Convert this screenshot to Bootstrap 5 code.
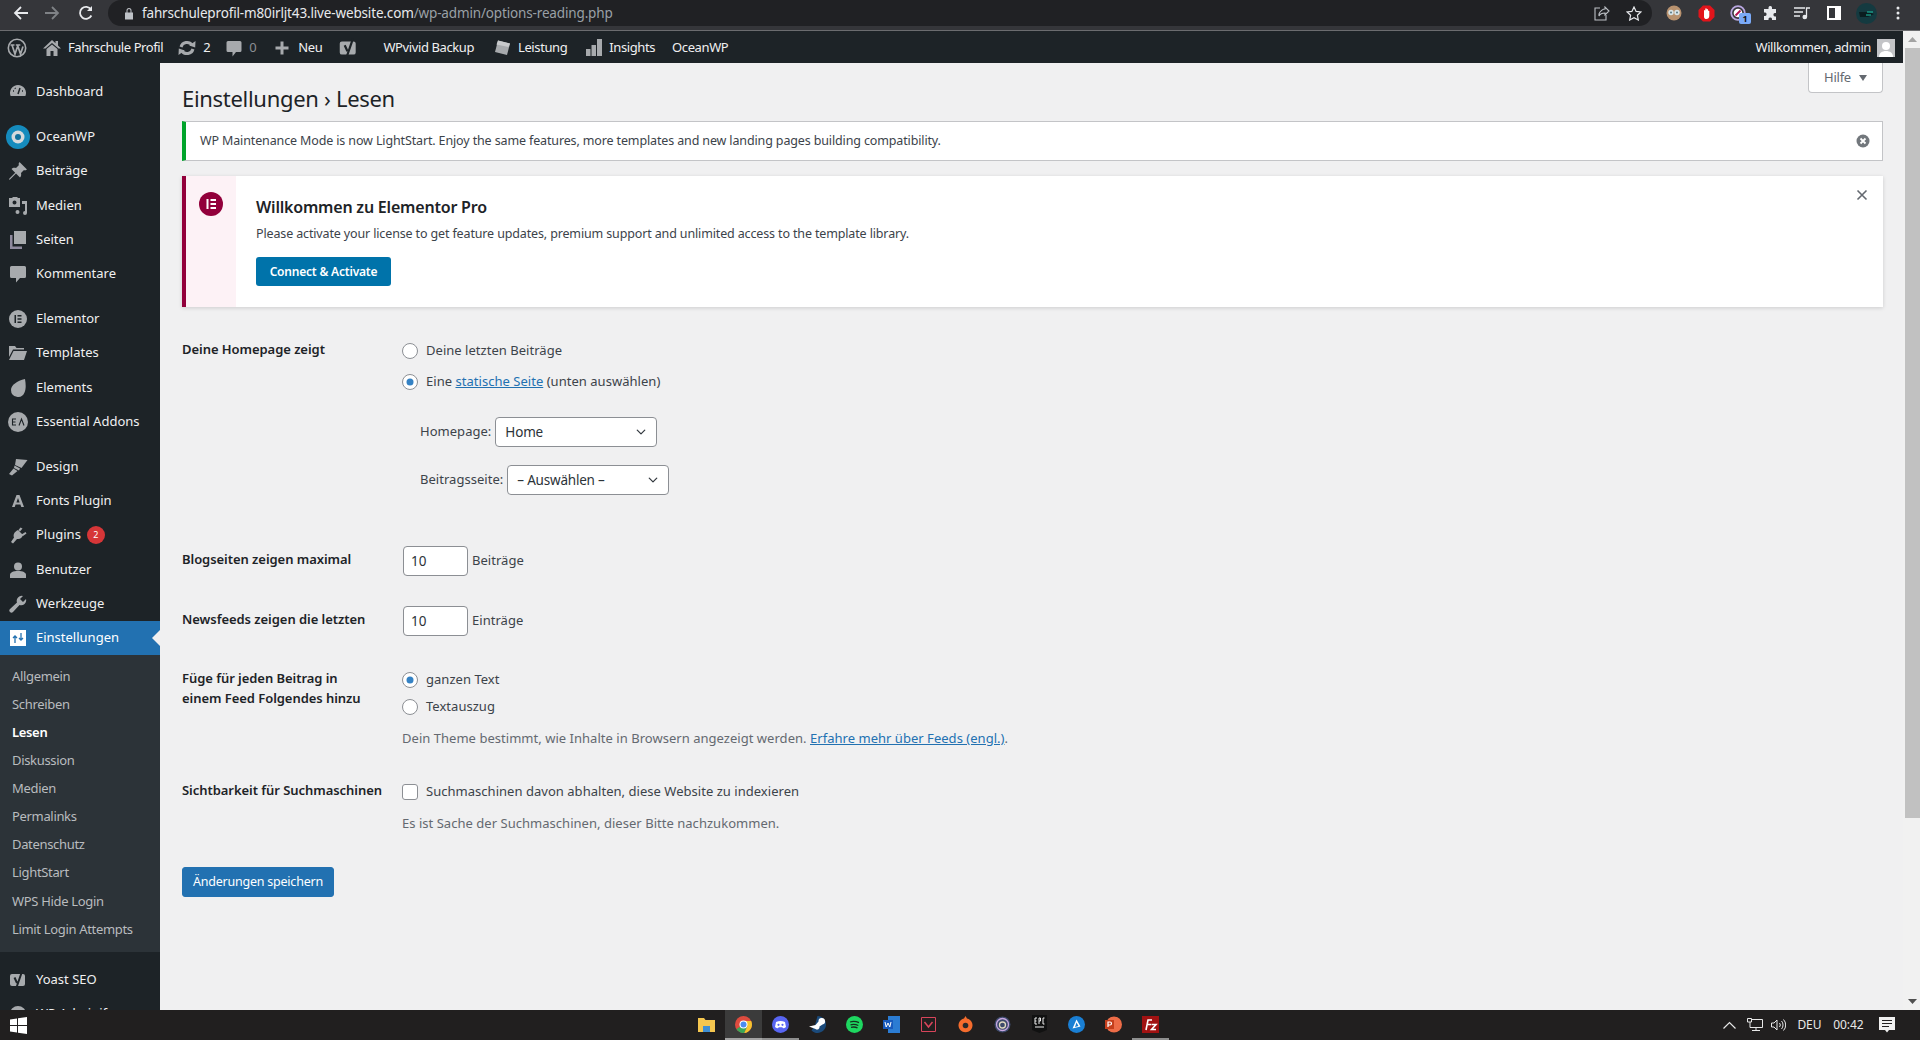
<!DOCTYPE html>
<html lang="de">
<head>
<meta charset="UTF-8">
<title>Einstellungen › Lesen</title>
<link href="https://cdn.jsdelivr.net/npm/bootstrap@5.3.0/dist/css/bootstrap.min.css" rel="stylesheet">
<style>
html, body { height: 100%; overflow: hidden; }
body { font-family: "Noto Sans", "Liberation Sans", sans-serif; font-size: 13px; letter-spacing: -.25px; color: #3c434a; background: #f0f0f1; }
.app-shell { height: 1040px; }
svg { display: block; flex: none; }

/* browser chrome */
.chrome-bar { height: 31px; background: #35363a; border-bottom: 1px solid #6b6c6f; flex: none; }
.chrome-btn { width: 32px; display: flex; justify-content: center; }
.chrome-nav { padding-left: 13px; height: 26px; width: 108px; }
.nav-gap { margin-right: 15px; }
.nav-gap-wide { margin-right: 18px; }
.url-pill { height: 26px; width: 1544px; background: #202124; border-radius: 13px; padding: 0 10px 0 16px; color: #e8eaed; font-size: 13.5px; letter-spacing: -.15px; }
.url-pill span { color: #9aa0a6; }
.chrome-ext { height: 26px; margin-left: 6px; }
.ext-badge { position: absolute; left: 17px; top: 8px; width: 12px; height: 11px; background: #7baaf7; color: #111; font-size: 9px; font-weight: 700; line-height: 11px; text-align: center; border-radius: 2px; letter-spacing: 0; }

/* admin bar */
.admin-top { height: 32px; background: #1d2327; color: #f0f0f1; flex: none; padding: 2px 8px 0 0; letter-spacing: -.4px; }
.admin-top .bar-item { display: flex; align-items: center; gap: 6px; white-space: nowrap; }
.bar-muted { color: #8c8f94; }
.bar-logo { margin-left: 7px; }
.bar-gap-14 { margin-left: 14px; }
.bar-gap-15 { margin-left: 15px; }
.bar-gap-16 { margin-left: 16px; }
.bar-gap-17 { margin-left: 17px; }
.bar-gap-18 { margin-left: 18px; }
.bar-gap-24 { margin-left: 24px; }

/* side menu */
.side-menu { width: 160px; background: #1d2327; color: #f0f0f1; padding-top: 12px; overflow: hidden; flex: none; letter-spacing: 0; }
.menu-item { height: 34.3px; display: flex; align-items: center; white-space: nowrap; position: relative; }
.menu-ico { width: 36px; display: flex; justify-content: center; flex: none; }
.menu-sep { height: 10.5px; }
.menu-item.is-current { background: #2271b1; color: #fff; }
.menu-item.is-current::after { content: ""; position: absolute; right: 0; top: 9px; border: 8px solid transparent; border-right-color: #f0f0f1; border-left-width: 0; }
.plugin-count { display: inline-block; background: #d63638; color: #fff; font-size: 9px; letter-spacing: 0; border-radius: 9px; min-width: 18px; height: 18px; line-height: 18px; text-align: center; margin-left: 6px; }
.sub-menu { background: #2c3338; padding: 6.5px 0 9.5px; margin-bottom: 10.5px; letter-spacing: -.33px; }
.sub-menu div { height: 28.1px; line-height: 28.1px; padding-left: 12px; color: #b9bcbf; white-space: nowrap; }
.sub-menu .is-on { color: #fff; font-weight: 600; }

/* content */
.page-main { padding: 0 20px 0 22px; overflow: hidden; min-width: 0; }
.head-row { height: 58px; }
.head-row h1 { font-size: 22px; font-weight: 400; color: #1d2327; margin: 21px 0 0; line-height: 29px; letter-spacing: -.3px; }
.help-tab { width: 75px; height: 30px; background: #fff; border: 1px solid #c3c4c7; border-top: 0; border-radius: 0 0 4px 4px; color: #646970; gap: 8px; }
.help-tab i { border: 4.5px solid transparent; border-top: 6px solid #646970; border-bottom: 0; }
.notice-line { height: 40px; background: #fff; border: 1px solid #c3c4c7; border-left: 4px solid #00a32a; padding: 0 12px 0 14px; margin-bottom: 15px; font-size: 12.5px; letter-spacing: -.135px; }
.promo-box { height: 131px; background: #fff; border-left: 4px solid #92003b; box-shadow: 0 1px 4px rgba(0,0,0,.15); }
.promo-side { width: 50px; background: #fdf2f6; padding: 16px 0 0 13px; flex: none; }
.promo-body { padding: 20px 0 0 20px; }
.promo-body h3 { font-size: 16px; font-weight: 600; color: #1d2327; margin: 0 0 6px; line-height: 22px; letter-spacing: -.2px; }
.promo-body p { margin: 0 0 13px; font-size: 12.5px; line-height: 20px; letter-spacing: -.14px; }
.btn.promo-btn { background: #0073aa; color: #fff; font-size: 12px; font-weight: 600; border: 0; border-radius: 3px; height: 29px; width: 135px; padding: 0; letter-spacing: -.2px; }
.promo-close { padding: 13px 15px 0 0; }

.wp-form { letter-spacing: .03px; }
.field-block { display: flex; }
.field-label { width: 220px; flex: none; font-weight: 600; color: #1d2327; line-height: 19.5px; letter-spacing: -.05px; margin-top: -1px; }
.num-row .field-label { margin-top: -2px; }
.choice-line { height: 20px; display: flex; align-items: center; gap: 8px; }
.form-check-input { width: 16px; height: 16px; margin: 0; border: 1px solid #8c8f94; background-color: #fff; flex: none; }
.form-check-input:checked[type=radio] { background-color: #fff; border-color: #8c8f94; background-image: url("data:image/svg+xml,%3csvg xmlns='http://www.w3.org/2000/svg' viewBox='-4 -4 8 8'%3e%3ccircle r='2' fill='%233582c4'/%3e%3c/svg%3e"); }
.form-check-input[type=checkbox] { border-radius: 3px; }
.drop-line { display: flex; align-items: center; gap: 4px; padding-left: 18px; }
.form-select.wp-drop { width: 162px; height: 30px; padding: 0 24px 0 9px; font-size: 13.5px; letter-spacing: -.2px; color: #2c3338; border-color: #8c8f94; border-radius: 4px; line-height: 28px; background-position: right 8px center; background-size: 14px 10px; font-family: inherit; }
.form-control.wp-num { width: 65px; height: 30px; padding: 0 7px; margin-left: 1px; font-size: 13.5px; color: #2c3338; border-color: #8c8f94; border-radius: 4px; font-family: inherit; }
.hint-text { color: #646970; line-height: 20px; }
.page-main a { color: #2271b1; }
.btn.save-btn { background: #2271b1; border: 1px solid #2271b1; color: #fff; font-size: 12.5px; border-radius: 3px; width: 152px; height: 30px; padding: 0; letter-spacing: -.23px; margin-top: 34px; }
.gap-block-first { margin-top: 34px; }
.second-choice { margin-top: 11px; }
.drop-one { margin-top: 25px; }
.drop-two { margin-top: 18px; }
.num-one { margin-top: 51px; }
.num-two { margin-top: 30px; }
.feed-block { margin-top: 34px; }
.feed-second { margin-top: 7px; }
.hint-gap { margin-top: 11px; }

/* scrollbar */
.fake-scroll { width: 17px; background: #f1f1f1; flex: none; padding-left: 2px; }
.scroll-thumb { height: 770px; background: #c1c1c1; }
.scroll-end { height: 17px; }

/* taskbar */
.task-bar { height: 30px; background: #211f1f; color: #e8e8e8; flex: none; letter-spacing: -.1px; font-size: 12px; }
.task-start { width: 36px; display: flex; justify-content: center; }
.task-apps { margin-left: 652px; }
.task-cell { width: 37px; height: 30px; display: flex; align-items: center; justify-content: center; border-bottom: 2px solid transparent; }
.task-cell.is-open { border-bottom-color: #8f8f8f; }
.task-cell.is-active { background: #3b3b3b; border-bottom-color: #a3a3a3; }
.tray-item { display: flex; align-items: center; }
.tray-net { margin-left: 11px; }
.tray-sound { margin-left: 8px; }
.tray-lang { margin-left: 11px; }
.tray-time { margin-left: 12px; }
.tray-note { margin: 0 25px 0 15.5px; }
</style>
</head>
<body>
<div class="app-shell d-flex flex-column">

  <!-- browser -->
  <div class="chrome-bar d-flex align-items-start">
    <div class="chrome-nav d-flex align-items-center">
      <svg class="nav-gap" width="16" height="16" viewBox="0 0 16 16" fill="none" stroke="#e8eaed" stroke-width="1.8"><path d="M15 8H2M8 2 2 8l6 6"/></svg>
      <svg class="nav-gap-wide" width="16" height="16" viewBox="0 0 16 16" fill="none" stroke="#7f8286" stroke-width="1.8"><path d="M1 8h13M8 2l6 6-6 6"/></svg>
      <svg width="16" height="16" viewBox="0 0 16 16" fill="none" stroke="#e8eaed" stroke-width="1.8"><path d="M13.4 10.5A6 6 0 1 1 13 4.5"/><path d="M14 1v5H9" fill="#e8eaed" stroke="none"/></svg>
    </div>
    <div class="url-pill d-flex align-items-center">
      <svg class="me-2" width="10" height="13" viewBox="0 0 10 13" fill="#bdc1c6"><path d="M1 5.5h8v7H1zM2.5 5.5V3.6a2.5 2.5 0 0 1 5 0v1.9h-1V3.6a1.5 1.5 0 0 0-3 0v1.9z"/></svg>
      <div class="flex-grow-1">fahrschuleprofil-m80irljt43.live-website.com<span>/wp-admin/options-reading.php</span></div>
      <svg class="me-3" width="16" height="15" viewBox="0 0 16 15" fill="none" stroke="#bdc1c6" stroke-width="1.1"><path d="M5 8c1-3 4-5 6-5V1l4 4-4 4V7C8 7 6 8 5 10z"/><path d="M6 2H1v12h11V9"/></svg>
      <svg width="16" height="15" viewBox="0 0 16 15" fill="none" stroke="#e8eaed" stroke-width="1.2"><path d="m8 1 2.1 4.4 4.8.6-3.500 3.300.9 4.700L8 11.700 3.700 14l.9-4.700L1.100 6l4.800-.6z"/></svg>
    </div>
    <div class="chrome-ext d-flex align-items-center">
      <div class="chrome-btn"><svg width="16" height="16" viewBox="0 0 16 16"><circle cx="8" cy="8" r="7.500" fill="#b8926f"/><circle cx="5" cy="7.500" r="2.700" fill="#d9e5e8"/><circle cx="11" cy="7.500" r="2.700" fill="#d9e5e8"/><circle cx="5" cy="7.500" r="1" fill="#5a7a85"/><circle cx="11" cy="7.500" r="1" fill="#5a7a85"/></svg></div>
      <div class="chrome-btn"><svg width="17" height="17" viewBox="0 0 17 17"><path d="M5 .5h7L16.500 5v7L12 16.500H5L.5 12V5z" fill="#e2141b"/><path d="M6 12V5.500a.7.7 0 0 1 1.300 0V4a.7.7 0 0 1 1.400 0v.5a.7.7 0 0 1 1.300 0V6a.7.700 0 0 1 1.300 0v5c0 2-1.300 3-2.800 3S6.300 13.500 6 12z" fill="#fff"/></svg></div>
      <div class="chrome-btn position-relative"><svg width="16" height="16" viewBox="0 0 16 16" fill="none"><circle cx="8" cy="8" r="6.800" stroke="#b9a7e0" stroke-width="1.800"/><circle cx="8" cy="8" r="4.300" fill="#fff"/><path d="m5.500 10.500 5-5" stroke="#b0104f" stroke-width="1.800"/></svg><span class="ext-badge">1</span></div>
      <div class="chrome-btn"><svg width="15" height="15" viewBox="0 0 15 15" fill="#e8eaed"><path d="M5.500 1.500a1.800 1.800 0 0 1 3.500 0V3h4v4h-1.200a1.800 1.800 0 0 0 0 3.500H13V14H9v-1.200a1.800 1.800 0 0 0-3.500 0V14H1v-4h1.200a1.800 1.800 0 0 0 0-3.500H1V3h4.500z"/></svg></div>
      <div class="chrome-btn"><svg width="16" height="14" viewBox="0 0 16 14" fill="none" stroke="#e8eaed" stroke-width="1.300"><path d="M0 2h11M0 6h9M0 10h6M12.500 11V2H16"/><circle cx="10.800" cy="11" r="1.700" fill="#e8eaed"/></svg></div>
      <div class="chrome-btn"><svg width="14" height="14" viewBox="0 0 14 14"><path d="M0 0h14v14H0z" fill="#fff"/><path d="M2 2h6v10H2z" fill="#35363a"/></svg></div>
      <div class="chrome-btn"><svg width="21" height="21" viewBox="0 0 21 21"><circle cx="10.500" cy="10.500" r="10.500" fill="#143a40"/><path d="M3 9h10l5 2-6 3H4z" fill="#0b1d20"/><path d="M11 9h6M10 12h5" stroke="#1cc7a9"/></svg></div>
      <div class="chrome-btn"><svg width="4" height="14" viewBox="0 0 4 14" fill="#e8eaed"><circle cx="2" cy="2" r="1.500"/><circle cx="2" cy="7" r="1.500"/><circle cx="2" cy="12" r="1.500"/></svg></div>
    </div>
  </div>

  <div class="d-flex flex-grow-1 overflow-hidden">
    <div class="d-flex flex-column flex-grow-1 overflow-hidden">
      <!-- wp admin bar -->
      <div class="admin-top d-flex align-items-center">
        <div class="bar-item bar-logo"><svg width="20" height="20" viewBox="0 0 20 20" fill="none" stroke="#a7aaad"><circle cx="10" cy="10" r="8.700" stroke-width="1.600"/><path d="M3.500 7h4M5 7l3 9 2.500-7.500M8.800 7h4.500M10.500 7l3 9 2.500-7.500" stroke-width="1.700"/></svg></div>
        <div class="bar-item bar-gap-15"><svg width="20" height="20" viewBox="0 0 20 20" fill="#a7aaad"><path d="M10 2 1 10.500h2.500L10 5l6.500 5.500H19l-3-3V3h-2.500v2.200z"/><path d="M4.500 11 10 6.500l5.500 4.500v7H11.500v-5h-3v5H4.500z"/></svg><span>Fahrschule Profil</span></div>
        <div class="bar-item bar-gap-14"><svg width="20" height="20" viewBox="0 0 20 20" fill="none" stroke="#a7aaad" stroke-width="3"><path d="M4 9a6.200 6.200 0 0 1 11-2M16 11a6.200 6.200 0 0 1-11 2"/><path d="m18.500 3-.3 6.500-6-2zM1.500 17l.3-6.500 6 2z" fill="#a7aaad" stroke="none"/></svg><span>2</span></div>
        <div class="bar-item bar-muted bar-gap-15"><svg width="18" height="20" viewBox="0 0 18 20" fill="#a7aaad"><path d="M3 3h12a1.500 1.500 0 0 1 1.500 1.500v8A1.500 1.500 0 0 1 15 14h-4l-3.500 4.500V14H3a1.500 1.500 0 0 1-1.500-1.500v-8A1.500 1.500 0 0 1 3 3z"/></svg><span>0</span></div>
        <div class="bar-item bar-gap-16"><svg width="20" height="20" viewBox="0 0 20 20" fill="#a7aaad"><path d="M8.500 3.500h3v5h5v3h-5v5h-3v-5h-5v-3h5z"/></svg><span>Neu</span></div>
        <div class="bar-item bar-gap-15"><svg width="22" height="22" viewBox="0 0 20 20"><path d="M4.500 4H15a2 2 0 0 1 2 2v8a2 2 0 0 1-2 2H4.500a2 2 0 0 1-2-2V6a2 2 0 0 1 2-2z" fill="#a7aaad"/><path d="M7 7.500 9.500 13M14.500 1.500 9 17.500 6.500 18" fill="none" stroke="#1d2327" stroke-width="2"/></svg></div>
        <div class="bar-item bar-gap-24"><span>WPvivid Backup</span></div>
        <div class="bar-item bar-gap-18"><svg width="20" height="20" viewBox="0 0 20 20"><path d="M6 2.500 18 5.500 15 17 3 14z" fill="#a7aaad"/><path d="M6 2.500 18 5.500l-1.500 3.500L4.500 6.500z" fill="#c8cacc"/></svg><span>Leistung</span></div>
        <div class="bar-item bar-gap-18"><svg width="18" height="20" viewBox="0 0 18 20" fill="#a7aaad"><path d="M1 11h4.500v7H1zM6.500 7H11v11H6.500zM12 1h5v17h-5z"/></svg><span>Insights</span></div>
        <div class="bar-item bar-gap-17"><span>OceanWP</span></div>
        <div class="bar-item ms-auto"><span>Willkommen, admin</span><svg width="18" height="18" viewBox="0 0 18 18"><path d="M0 0h18v18H0z" fill="#c3c4c7"/><circle cx="9" cy="7" r="4" fill="#fff"/><path d="M2 18c0-4 3-6 7-6s7 2 7 6z" fill="#fff"/></svg></div>
      </div>

      <div class="d-flex flex-grow-1 overflow-hidden">
        <!-- side menu -->
        <nav class="side-menu">
          <div class="menu-item"><span class="menu-ico"><svg width="18" height="18" viewBox="0 0 18 18" fill="#a7aaad"><path d="M9 2a8 8 0 0 1 7.400 11H1.600A8 8 0 0 1 9 2z"/><path d="M9 11 11 5M4 8h1M13 8h1M6 5l.5.7" stroke="#1d2327" stroke-width="1.500"/></svg></span>Dashboard</div>
          <div class="menu-sep"></div>
          <div class="menu-item"><span class="menu-ico"><svg width="24" height="24" viewBox="0 0 24 24"><circle cx="12" cy="12" r="12" fill="#13aff0" opacity=".75"/><circle cx="12" cy="12" r="6.500" fill="#d6d9dc"/><circle cx="12" cy="12" r="3" fill="#13719c"/></svg></span>OceanWP</div>
          <div class="menu-item"><span class="menu-ico"><svg width="20" height="20" viewBox="0 0 20 20" fill="#a7aaad"><path d="M11.500 1 19 8.500l-2 1-1-.5-3 3c.5 2 0 3.500-1 4.500L8 12.500 2 18.500l-1 .2.200-1 6-6L3.500 8C4.500 7 6 6.500 8 7l3-3-.5-1z"/></svg></span>Beiträge</div>
          <div class="menu-item"><span class="menu-ico"><svg width="20" height="20" viewBox="0 0 20 20" fill="#a7aaad"><path d="M1 2h3l1-1h4l1 1h2v9H1zm5.500 2.500a2 2 0 1 0 0 4 2 2 0 0 0 0-4z" fill-rule="evenodd"/><path d="M14 5h5v12a2 2 0 1 1-2-2V8h-3zM9.500 14a2 2 0 1 1-2 2 2 2 0 0 1 2-2z"/></svg></span>Medien</div>
          <div class="menu-item"><span class="menu-ico"><svg width="16" height="18" viewBox="0 0 16 18" fill="#a7aaad"><path d="M4 0h12v13H4z"/><path d="M0 4h2.500v11.500H12V18H0z" fill="#8f8a9e"/></svg></span>Seiten</div>
          <div class="menu-item"><span class="menu-ico"><svg width="16" height="18" viewBox="0 0 16 18" fill="#a7aaad"><path d="M1.500 1h13A1.500 1.500 0 0 1 16 2.500v9a1.500 1.500 0 0 1-1.500 1.500H10l-4 4.500V13H1.500A1.500 1.500 0 0 1 0 11.500v-9A1.500 1.500 0 0 1 1.500 1z"/></svg></span>Kommentare</div>
          <div class="menu-sep"></div>
          <div class="menu-item"><span class="menu-ico"><svg width="18" height="18" viewBox="0 0 18 18"><circle cx="9" cy="9" r="9" fill="#a7aaad"/><path d="M5.500 5h1.500v8H5.500zM8.500 5h4v1.500h-4zM8.500 8.200h4v1.500h-4zM8.500 11.500h4V13h-4z" fill="#1d2327"/></svg></span>Elementor</div>
          <div class="menu-item"><span class="menu-ico"><svg width="18" height="14" viewBox="0 0 18 14" fill="#a7aaad"><path d="M0 0h6l1.500 2H15v1.500H4L0 11z"/><path d="M4.500 5H18l-3 9H0z"/></svg></span>Templates</div>
          <div class="menu-item"><span class="menu-ico"><svg width="15" height="18" viewBox="0 0 15 18" fill="#a7aaad"><path d="M14 0c1 6 1 10-.5 13.500A7 7 0 0 1 0 11C0 6 6 2 14 0z"/></svg></span>Elements</div>
          <div class="menu-item"><span class="menu-ico"><svg width="20" height="20" viewBox="0 0 20 20"><circle cx="10" cy="10" r="10" fill="#a7aaad"/><path d="M8 7H4.500v6H8M4.500 10h3M11 13.500 13.500 7l2.500 6.500" fill="none" stroke="#1d2327" stroke-width="1.100"/></svg></span>Essential Addons</div>
          <div class="menu-sep"></div>
          <div class="menu-item"><span class="menu-ico"><svg width="20" height="20" viewBox="0 0 20 20" fill="#a7aaad"><path d="M8 2 19.500 3 13.500 11 7 8z"/><path d="M6.500 8.500 12 11.500l-1 2-5-2.500zM5.500 11.500 9.500 14 4 18.500 1 17z"/></svg></span>Design</div>
          <div class="menu-item"><span class="menu-ico"><svg width="14" height="14" viewBox="0 0 14 14" fill="#a7aaad"><path d="M5.500 1h3L13 13h-2.700l-.9-2.600H4.600L3.700 13H1zm1.500 3L5.400 8.400h3.200z" fill-rule="evenodd"/></svg></span>Fonts Plugin</div>
          <div class="menu-item"><span class="menu-ico"><svg width="18" height="18" viewBox="0 0 18 18" fill="#a7aaad"><path d="M9 4 14 9c-1 3-3 4.500-6 4l-4 4.500-2-1.500 3-4.500C4 9 5 6 9 4zM11.500 1.500l2 1-2.500 3-1.500-1.500zM16.500 6l1 1.500-3.500 2.500-1.500-1.500z"/></svg></span>Plugins<span class="plugin-count">2</span></div>
          <div class="menu-item"><span class="menu-ico"><svg width="16" height="16" viewBox="0 0 16 16" fill="#a7aaad"><circle cx="8" cy="4.500" r="4"/><path d="M0 16v-3c0-2.500 3-4 8-4s8 1.500 8 4v3z"/></svg></span>Benutzer</div>
          <div class="menu-item"><span class="menu-ico"><svg width="18" height="18" viewBox="0 0 18 18" fill="#a7aaad"><path d="M17 4a5 5 0 0 1-6.500 6L4 17a2.100 2.100 0 0 1-3-3l7-6.500A5 5 0 0 1 14 1l-3 3 3 3z"/></svg></span>Werkzeuge</div>
          <div class="menu-item is-current"><span class="menu-ico"><svg width="16" height="16" viewBox="0 0 16 16"><path d="M0 0h16v16H0z" fill="#fff"/><path d="M5 6v7M3 8l2-2 2 2M11 3v7M9 8l2 2 2-2" fill="none" stroke="#2271b1" stroke-width="1.300"/></svg></span>Einstellungen</div>
          <div class="sub-menu">
            <div>Allgemein</div><div>Schreiben</div><div class="is-on">Lesen</div><div>Diskussion</div><div>Medien</div><div>Permalinks</div><div>Datenschutz</div><div>LightStart</div><div>WPS Hide Login</div><div>Limit Login Attempts</div>
          </div>
          <div class="menu-item"><span class="menu-ico"><svg width="20" height="20" viewBox="0 0 20 20"><path d="M4 4h11a2 2 0 0 1 2 2v8a2 2 0 0 1-2 2H4a2 2 0 0 1-2-2V6a2 2 0 0 1 2-2z" fill="#a7aaad"/><path d="M6.500 7.500 9 13M14 1.500 8.500 17.500 6 18" fill="none" stroke="#1d2327" stroke-width="2"/></svg></span>Yoast SEO</div>
          <div class="menu-item"><span class="menu-ico"><svg width="18" height="18" viewBox="0 0 18 18" fill="#a7aaad"><circle cx="9" cy="9" r="8"/></svg></span>WP Adminify</div>
        </nav>

        <main class="page-main flex-grow-1">
          <div class="head-row d-flex justify-content-between align-items-start">
            <h1>Einstellungen › Lesen</h1>
            <div class="help-tab d-flex align-items-center justify-content-center">Hilfe <i></i></div>
          </div>

          <div class="notice-line d-flex align-items-center justify-content-between">
            <span>WP Maintenance Mode is now LightStart. Enjoy the same features, more templates and new landing pages building compatibility.</span>
            <svg width="14" height="14" viewBox="0 0 14 14"><circle cx="7" cy="7" r="6.500" fill="#72777c"/><path d="m4.500 4.500 5 5m0-5-5 5" stroke="#fff" stroke-width="1.800"/></svg>
          </div>

          <div class="promo-box d-flex">
            <div class="promo-side"><svg width="24" height="24" viewBox="0 0 24 24"><circle cx="12" cy="12" r="12" fill="#92003b"/><path d="M7.500 7h2v10h-2zM11.500 7h5.500v2h-5.500zM11.500 11h5.500v2h-5.500zM11.500 15h5.500v2h-5.500z" fill="#fff"/></svg></div>
            <div class="promo-body flex-grow-1">
              <h3>Willkommen zu Elementor Pro</h3>
              <p>Please activate your license to get feature updates, premium support and unlimited access to the template library.</p>
              <button class="btn promo-btn">Connect &amp; Activate</button>
            </div>
            <div class="promo-close"><svg width="12" height="12" viewBox="0 0 12 12"><path d="m1.500 1.500 9 9m0-9-9 9" stroke="#646970" stroke-width="1.600"/></svg></div>
          </div>

          <form class="wp-form">
            <div class="field-block gap-block-first">
              <div class="field-label">Deine Homepage zeigt</div>
              <div>
                <label class="choice-line"><input class="form-check-input" type="radio" name="front">Deine letzten Beiträge</label>
                <label class="choice-line second-choice"><input class="form-check-input" type="radio" name="front" checked><span>Eine <a href="#">statische Seite</a> (unten auswählen)</span></label>
                <div class="drop-line drop-one">Homepage: <select class="form-select wp-drop"><option>Home</option></select></div>
                <div class="drop-line drop-two">Beitragsseite: <select class="form-select wp-drop"><option>– Auswählen –</option></select></div>
              </div>
            </div>

            <div class="field-block num-row align-items-center num-one">
              <div class="field-label">Blogseiten zeigen maximal</div>
              <div class="d-flex align-items-center gap-1"><input class="form-control wp-num" value="10"><span>Beiträge</span></div>
            </div>

            <div class="field-block num-row align-items-center num-two">
              <div class="field-label">Newsfeeds zeigen die letzten</div>
              <div class="d-flex align-items-center gap-1"><input class="form-control wp-num" value="10"><span>Einträge</span></div>
            </div>

            <div class="field-block feed-block">
              <div class="field-label">Füge für jeden Beitrag in<br>einem Feed Folgendes hinzu</div>
              <div>
                <label class="choice-line"><input class="form-check-input" type="radio" name="feed" checked>ganzen Text</label>
                <label class="choice-line feed-second"><input class="form-check-input" type="radio" name="feed">Textauszug</label>
                <div class="hint-text hint-gap">Dein Theme bestimmt, wie Inhalte in Browsern angezeigt werden. <a href="#">Erfahre mehr über Feeds (engl.)</a>.</div>
              </div>
            </div>

            <div class="field-block feed-block">
              <div class="field-label">Sichtbarkeit für Suchmaschinen</div>
              <div>
                <label class="choice-line"><input class="form-check-input" type="checkbox">Suchmaschinen davon abhalten, diese Website zu indexieren</label>
                <div class="hint-text hint-gap">Es ist Sache der Suchmaschinen, dieser Bitte nachzukommen.</div>
              </div>
            </div>

            <button type="button" class="btn save-btn">Änderungen speichern</button>
          </form>
        </main>
      </div>
    </div>

    <div class="fake-scroll d-flex flex-column">
      <div class="scroll-end d-flex justify-content-center align-items-center"><svg width="9" height="5" viewBox="0 0 9 5" fill="#a3a3a3"><path d="M4.500 0 9 5H0z"/></svg></div>
      <div class="scroll-thumb"></div>
      <div class="scroll-end mt-auto d-flex justify-content-center align-items-center"><svg width="9" height="5" viewBox="0 0 9 5" fill="#505050"><path d="M0 0h9L4.500 5z"/></svg></div>
    </div>
  </div>

  <!-- windows taskbar -->
  <div class="task-bar d-flex align-items-center">
    <div class="task-start"><svg width="17" height="17" viewBox="0 0 17 17" fill="#fff"><path d="M0 2.500 7 1.500v6.500H0zM8 1.300 17 0v8H8zM0 9h7v6.500L0 14.500zM8 9h9v8l-9-1.300z"/></svg></div>
    <div class="task-apps d-flex">
      <div class="task-cell"><svg width="17" height="15" viewBox="0 0 17 15"><path d="M0 1h6l1.500 2H17v12H0z" fill="#f5c64f"/><path d="M5 9h7v6H5z" fill="#3f8fd4"/></svg></div>
      <div class="task-cell is-active"><svg width="17" height="17" viewBox="0 0 17 17"><circle cx="8.500" cy="8.500" r="8.500" fill="#dd4b3e"/><path d="M8.500 8.500 1.500 13a8.500 8.500 0 0 0 7.800 4L12.500 10z" fill="#3ba858"/><path d="M8.500 5h7.700a8.500 8.500 0 0 1-6.900 12l3.200-7z" fill="#f6c42f"/><circle cx="8.500" cy="8.500" r="4" fill="#fff"/><circle cx="8.500" cy="8.500" r="3" fill="#4a8cf0"/></svg></div>
      <div class="task-cell is-open"><svg width="17" height="17" viewBox="0 0 17 17"><circle cx="8.500" cy="8.500" r="8.500" fill="#5865f2"/><path d="M4 6c3-1.500 6-1.500 9 0l1 5c-1 .8-2 1.200-3 1.300l-.7-1H6.700l-.7 1c-1-.1-2-.5-3-1.300z" fill="#fff"/><circle cx="6.500" cy="8.800" r="1.100" fill="#5865f2"/><circle cx="10.500" cy="8.800" r="1.100" fill="#5865f2"/></svg></div>
      <div class="task-cell"><svg width="17" height="17" viewBox="0 0 17 17"><path d="M8.500 0a8.500 8.500 0 1 1-6 14.500L6 9z" fill="#1b4a7a"/><path d="M0 10.500 6.500 13a2.500 2.500 0 0 0 4-2.500l3-2a3.300 3.300 0 1 0-4-3L6.500 9z" fill="#fff"/></svg></div>
      <div class="task-cell"><svg width="17" height="17" viewBox="0 0 17 17"><circle cx="8.500" cy="8.500" r="8.500" fill="#1ed760"/><path d="M4 6c3-1 6-.8 9 .6M4.500 8.800c3-.8 5.300-.5 7.800.7M5 11.300c2.500-.6 4.500-.4 6.500.6" fill="none" stroke="#14301e" stroke-width="1.300"/></svg></div>
      <div class="task-cell"><svg width="17" height="17" viewBox="0 0 17 17"><path d="M5 0h12v17H5z" fill="#2b7cd3"/><path d="M0 4h10v9H0z" fill="#185abd"/><path d="m2 6 1.200 5L5 7l1.800 4L8 6" fill="none" stroke="#fff"/></svg></div>
      <div class="task-cell"><svg width="15" height="15" viewBox="0 0 15 15" fill="none" stroke="#d8455b"><path d="M.5.500h14v14H.5z"/><path d="m3.500 5 4 5 4-5" stroke-width="1.500"/></svg></div>
      <div class="task-cell"><svg width="15" height="17" viewBox="0 0 15 17"><path d="M7.500 0 9 2.500a7 7 0 1 1-3 0z" fill="#f56c2d"/><circle cx="7.500" cy="9.500" r="2.800" fill="#2a2a2a"/></svg></div>
      <div class="task-cell"><svg width="17" height="17" viewBox="0 0 17 17" fill="none"><circle cx="8.500" cy="8.500" r="8" fill="#3d4a6b"/><circle cx="8.500" cy="8.500" r="6" stroke="#c7a7e0" stroke-width="1.300"/><circle cx="8.500" cy="9" r="3" stroke="#e0d8c0" stroke-width="1.300"/></svg></div>
      <div class="task-cell"><svg width="15" height="18" viewBox="0 0 15 18"><path d="M0 0h15v15l-7.500 3L0 15z" fill="#111"/><path d="M3 3h2M3 3v6h2M3 6h1.500M7 3v6M7 3h1.500v3H7M11 3h1.500M11 3v6h1.500M3 12h9" stroke="#eee" fill="none"/></svg></div>
      <div class="task-cell"><svg width="17" height="17" viewBox="0 0 17 17"><circle cx="8.500" cy="8.500" r="8.500" fill="#1a7fd4"/><path d="m8.500 3.500-4 9 8-2-4-7zm0 3 2 3.500-3.500 1z" fill="#fff" fill-rule="evenodd"/></svg></div>
      <div class="task-cell"><svg width="17" height="17" viewBox="0 0 17 17"><circle cx="9" cy="8.500" r="8" fill="#ed6c47"/><path d="M0 4h9v9H0z" fill="#c43e1c"/><path d="M3 11V6h2a1.500 1.500 0 0 1 0 3H3" fill="none" stroke="#fff" stroke-width="1.200"/></svg></div>
      <div class="task-cell is-open"><svg width="17" height="17" viewBox="0 0 17 17"><path d="M0 0h17v17H0z" fill="#a11212"/><path d="M4 14 6 4h4M5 8.500h4M9.500 8.500H14L9.500 13.500H14" fill="none" stroke="#fff" stroke-width="1.600"/></svg></div>
    </div>
    <div class="ms-auto d-flex align-items-center">
      <div class="tray-item"><svg width="13" height="8" viewBox="0 0 13 8" fill="none" stroke="#e8e8e8" stroke-width="1.200"><path d="m.5 7.500 6-6 6 6"/></svg></div>
      <div class="tray-item tray-net"><svg width="16" height="14" viewBox="0 0 16 14" fill="none" stroke="#e8e8e8"><path d="M3 1.500h12.500v8H3zM9 9.500v3M5 12.500h8"/><path d="M.5 .5h4v3.500h-4z" fill="#211f1f"/></svg></div>
      <div class="tray-item tray-sound"><svg width="15" height="12" viewBox="0 0 15 12" fill="none" stroke="#e8e8e8"><path d="M.5 4h2.500L6 1v10L3 8H.5zM8.500 4a3 3 0 0 1 0 4M10.500 2a6 6 0 0 1 0 8M12.500 .5a8 8 0 0 1 0 11" /></svg></div>
      <div class="tray-item tray-lang">DEU</div>
      <div class="tray-item tray-time">00:42</div>
      <div class="tray-item tray-note"><svg width="16" height="16" viewBox="0 0 16 16"><path d="M0 0h16v13H10l-2 2.500L6 13H0z" fill="#f0f0f0"/><path d="M3 3.500h10M3 6.500h10M3 9.500h7" stroke="#211f1f"/></svg></div>
    </div>
  </div>
</div>
<script src="https://cdn.jsdelivr.net/npm/bootstrap@5.3.0/dist/js/bootstrap.bundle.min.js"></script>
</body>
</html>
